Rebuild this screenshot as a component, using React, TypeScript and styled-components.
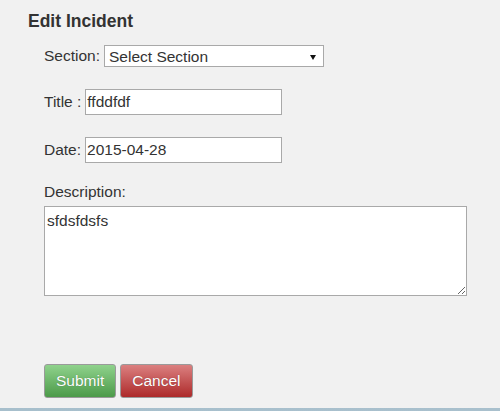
import React from "react";
import styled, { createGlobalStyle } from "styled-components";

const Global = createGlobalStyle`
  html, body { margin: 0; padding: 0; background: #f1f1f1; }
  body { font-family: "Liberation Sans", Arial, sans-serif; color: #333; }
`;

const Page = styled.div`
  width: 500px;
  height: 411px;
  display: flex;
  flex-direction: column;
  background: #f1f1f1;
  overflow: hidden;
`;

const Content = styled.div`
  flex: 1;
  padding: 11px 0 0 28px;
`;

const Heading = styled.h2`
  margin: 0;
  font-size: 17.5px;
  font-weight: bold;
  color: #333;
  line-height: 20px;
`;

const Form = styled.form`
  display: flex;
  flex-direction: column;
  padding-left: 16px;
  margin-top: 14px;
`;

const Row = styled.div<{ $mt?: number }>`
  display: flex;
  align-items: center;
  margin-top: ${(p) => p.$mt ?? 0}px;
`;

const Label = styled.label<{ $gap?: number }>`
  font-size: 15.5px;
  color: #333;
  margin-right: ${(p) => p.$gap ?? 3}px;
  line-height: 18px;
`;

const SelectWrap = styled.div`
  position: relative;
  display: flex;
`;

const Select = styled.select`
  appearance: none;
  -webkit-appearance: none;
  width: 220px;
  height: 22px;
  border: 1px solid #a9a9a9;
  border-radius: 0;
  background: #fff;
  font-family: "Liberation Sans", Arial, sans-serif;
  font-size: 15.5px;
  color: #333;
  padding: 0 0 0 4px;
  margin: 0;
  outline: none;
`;

const Arrow = styled.span`
  position: absolute;
  right: 8px;
  top: 10px;
  width: 0;
  height: 0;
  border-left: 3px solid transparent;
  border-right: 3px solid transparent;
  border-top: 5px solid #111;
  pointer-events: none;
`;

const TextInput = styled.input`
  width: 197px;
  height: 26px;
  box-sizing: border-box;
  border: 1px solid #a9a9a9;
  background: #fff;
  font-family: "Liberation Sans", Arial, sans-serif;
  font-size: 15.5px;
  color: #333;
  padding: 0 0 0 1px;
  margin: 0;
  outline: none;
`;

const Column = styled.div`
  display: flex;
  flex-direction: column;
  margin-top: 20px;
`;

const DescLabel = styled.label`
  font-size: 15.5px;
  color: #333;
  line-height: 18px;
  margin-bottom: 5px;
`;

const TextArea = styled.textarea`
  width: 423px;
  height: 90px;
  box-sizing: border-box;
  border: 1px solid #a9a9a9;
  background: #fff;
  font-family: "Liberation Sans", Arial, sans-serif;
  font-size: 15.5px;
  color: #333;
  padding: 5px 2px;
  margin: 0;
  outline: none;
  resize: both;
`;

const Buttons = styled.div`
  display: flex;
  gap: 4px;
  margin-top: 68px;
`;

const Button = styled.button<{ $variant: "ok" | "cancel" }>`
  height: 34px;
  box-sizing: border-box;
  padding: 0 11px;
  border: 1px solid #9a9a9a;
  border-radius: 3px;
  font-family: "Liberation Sans", Arial, sans-serif;
  font-size: 15.5px;
  color: #fff;
  text-shadow: 0 0 1px rgba(0, 0, 0, 0.35);
  background: ${(p) =>
    p.$variant === "ok"
      ? "linear-gradient(to bottom, #8fd28c, #4c9a49)"
      : "linear-gradient(to bottom, #db8080, #ad2a2a)"};
`;

const BottomBar = styled.div`
  height: 3px;
  background: linear-gradient(to right, #a7bfcc, #a9c0cd);
`;

export default function App() {
  return (
    <Page>
      <Global />
      <Content>
        <Heading>Edit Incident</Heading>
        <Form onSubmit={(e) => e.preventDefault()}>
          <Row>
            <Label $gap={4}>Section:</Label>
            <SelectWrap>
              <Select defaultValue="">
                <option value="">Select Section</option>
              </Select>
              <Arrow />
            </SelectWrap>
          </Row>
          <Row $mt={22}>
            <Label $gap={4}>Title :</Label>
            <TextInput defaultValue="ffddfdf" />
          </Row>
          <Row $mt={22}>
            <Label $gap={4}>Date:</Label>
            <TextInput defaultValue="2015-04-28" />
          </Row>
          <Column>
            <DescLabel>Description:</DescLabel>
            <TextArea defaultValue="sfdsfdsfs" />
          </Column>
          <Buttons>
            <Button $variant="ok">Submit</Button>
            <Button $variant="cancel">Cancel</Button>
          </Buttons>
        </Form>
      </Content>
      <BottomBar />
    </Page>
  );
}
